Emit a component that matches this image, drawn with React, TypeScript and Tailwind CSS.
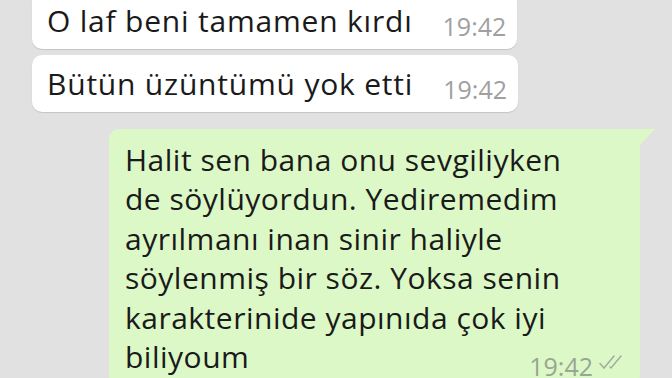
const font = { fontFamily: "'Open Sans', Roboto, sans-serif" };

const DoubleCheck: React.FC = () => (
  <svg width="30" height="16" viewBox="0 0 30 16" fill="none" stroke="#a2ad9c" strokeWidth="1.5" strokeLinecap="round">
    <path d="M3 9.5 L7 14 L17 2" />
    <path d="M13 13 L14 14 L24 2" />
  </svg>
);

const Incoming: React.FC<{ text: string; time: string; className?: string }> = ({ text, time, className }) => (
  <div className={"ml-[32px] w-fit h-[57px] bg-white rounded-[10px] shadow-[0_1px_1px_rgba(0,0,0,0.13)] flex items-end pl-[15px] pr-[11px] " + (className ?? "")}>
    <p className="self-center text-[30px] leading-[32px] tracking-[0.8px] text-[#1a1a1a]">{text}</p>
    <span className="text-[25px] leading-none text-[#a0a0a0] ml-[30px] pb-[10px]">{time}</span>
  </div>
);

export default function App() {
  return (
    <div style={font} className="w-[672px] h-[378px] overflow-hidden bg-[#e1e1e1] flex flex-col">
      <Incoming text="O laf beni tamamen kırdı" time="19:42" className="-mt-[8px] shrink-0" />
      <Incoming text="Bütün üzüntümü yok etti" time="19:42" className="mt-[6px] shrink-0" />
      <div className="relative ml-[109px] mt-[17px] w-[531px] shrink-0 bg-[#dcf8c6] rounded-[10px] rounded-tr-none pl-[16px] pr-[13px] pt-[11px] pb-[6px]">
        <svg className="absolute top-0 -right-[15px]" width="15" height="16" viewBox="0 0 15 16">
          <path d="M0 0 L15 0 L0 16 Z" fill="#dcf8c6" />
        </svg>
        <p className="text-[30px] leading-[39.4px] tracking-[0.5px] text-[#1a1a1a]">
          Halit sen bana onu sevgiliyken<br />
          de söylüyordun. Yediremedim<br />
          ayrılmanı inan sinir haliyle<br />
          söylenmiş bir söz. Yoksa senin<br />
          karakterinide yapınıda çok iyi<br />
          biliyoum
        </p>
        <div className="flex justify-end items-start gap-[4px] -mt-[22px]">
          <span className="text-[25px] leading-none text-[#98a692]">19:42</span>
          <DoubleCheck />
        </div>
      </div>
    </div>
  );
}
